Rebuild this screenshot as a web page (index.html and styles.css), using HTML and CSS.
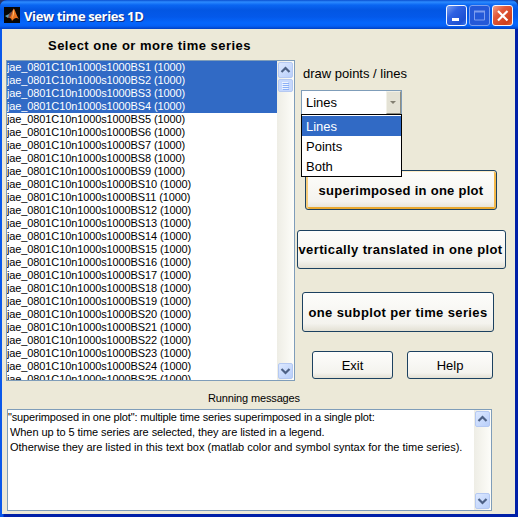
FILE: index.html
```
<!DOCTYPE html>
<html lang="en">
<head>
<meta charset="utf-8">
<title>View time series 1D</title>
<link rel="stylesheet" href="styles.css">
</head>
<body>
<div class="window">
  <header class="titlebar">
    <svg class="logo" width="16" height="16" viewBox="0 0 16 16">
      <rect width="16" height="16" fill="#080604"/>
      <path d="M1 9 L5 7 L8 4.5 L6 10 L4 11Z" fill="#5d9fb5"/>
      <path d="M5 7 L8 4.5 L9.5 2 L8 9 L6 11 L4 11Z" fill="#80473a"/>
      <path d="M9.8 1.5 C11 2 12 8 15 12 C12 10 10.5 11 8 14 C7.5 12 7 11 5.5 11 C8 9 8 4 9.8 1.5Z" fill="#e9731f"/>
      <path d="M9.8 2 C10.5 5 10 9 8 12 C9 8 8.8 5 9.8 2Z" fill="#ffc27a"/>
    </svg>
    <h1 class="title">View time series 1D</h1>
    <div class="controls">
      <span class="ctl"><svg width="17" height="17"><path d="M4 12.500h7" stroke="#fff" stroke-width="3"/></svg></span>
      <span class="ctl ctl-off"><svg width="17" height="17"><path d="M3.500 4v9h10V4M3 4.500h11" fill="none" stroke="#7d9cee"/><path d="M3 4.500h11" stroke="#7d9cee" stroke-width="2"/></svg></span>
      <span class="ctl ctl-close"><svg width="17" height="17"><path d="M4 4l9.500 9.500M13.500 4l-9.500 9.500" stroke="#fff" stroke-width="2.200"/></svg></span>
    </div>
  </header>
  <main class="content">
    <div class="upper">
      <section class="left">
        <h2 class="heading">Select one or more time series</h2>
        <div class="listbox">
          <ul class="rows">
            <li class="sel">jae_0801C10n1000s1000BS1 (1000)</li>
            <li class="sel">jae_0801C10n1000s1000BS2 (1000)</li>
            <li class="sel">jae_0801C10n1000s1000BS3 (1000)</li>
            <li class="sel">jae_0801C10n1000s1000BS4 (1000)</li>
            <li>jae_0801C10n1000s1000BS5 (1000)</li>
            <li>jae_0801C10n1000s1000BS6 (1000)</li>
            <li>jae_0801C10n1000s1000BS7 (1000)</li>
            <li>jae_0801C10n1000s1000BS8 (1000)</li>
            <li>jae_0801C10n1000s1000BS9 (1000)</li>
            <li>jae_0801C10n1000s1000BS10 (1000)</li>
            <li>jae_0801C10n1000s1000BS11 (1000)</li>
            <li>jae_0801C10n1000s1000BS12 (1000)</li>
            <li>jae_0801C10n1000s1000BS13 (1000)</li>
            <li>jae_0801C10n1000s1000BS14 (1000)</li>
            <li>jae_0801C10n1000s1000BS15 (1000)</li>
            <li>jae_0801C10n1000s1000BS16 (1000)</li>
            <li>jae_0801C10n1000s1000BS17 (1000)</li>
            <li>jae_0801C10n1000s1000BS18 (1000)</li>
            <li>jae_0801C10n1000s1000BS19 (1000)</li>
            <li>jae_0801C10n1000s1000BS20 (1000)</li>
            <li>jae_0801C10n1000s1000BS21 (1000)</li>
            <li>jae_0801C10n1000s1000BS22 (1000)</li>
            <li>jae_0801C10n1000s1000BS23 (1000)</li>
            <li>jae_0801C10n1000s1000BS24 (1000)</li>
            <li>jae_0801C10n1000s1000BS25 (1000)</li>
          </ul>
          <div class="scroll">
            <span class="arrow"><svg width="13" height="14"><path d="M2.500 9l4-4 4 4" fill="none" stroke="#4d6185" stroke-width="2.200"/></svg></span>
            <span class="thumb"><svg width="13" height="11"><path d="M3 2.500h6M3 4.500h6M3 6.500h6M3 8.500h6" stroke="#eef4fe"/><path d="M4 3.500h6M4 5.500h6M4 7.500h6M4 9.500h6" stroke="#8cb0f8"/></svg></span>
            <span class="arrow arrow-down"><svg width="13" height="14"><path d="M2.500 5l4 4 4-4" fill="none" stroke="#4d6185" stroke-width="2.200"/></svg></span>
          </div>
        </div>
      </section>
      <section class="right">
        <p class="label">draw points / lines</p>
        <div class="combo">
          <span class="combo-value">Lines</span>
          <span class="combo-arrow"><svg width="12" height="20"><path d="M3 9h6l-3 3z" fill="#827f72"/></svg></span>
          <ul class="menu">
            <li class="sel">Lines</li>
            <li>Points</li>
            <li>Both</li>
          </ul>
        </div>
        <button class="btn superimposed">superimposed in one plot</button>
        <button class="btn translated">vertically translated in one plot</button>
        <button class="btn subplot">one subplot per time series</button>
        <div class="actions">
          <button class="btn small exit">Exit</button>
          <button class="btn small help">Help</button>
        </div>
      </section>
    </div>
    <h3 class="caption">Running messages</h3>
    <div class="messages">
      <div class="log">
        <p class="m1">"superimposed in one plot": multiple time series superimposed in a single plot:</p>
        <p class="m2">When up to 5 time series are selected, they are listed in a legend.</p>
        <p class="m3">Otherwise they are listed in this text box (matlab color and symbol syntax for the time series).</p>
      </div>
      <div class="scroll">
        <span class="arrow"><svg width="13" height="14"><path d="M2.500 9l4-4 4 4" fill="none" stroke="#4d6185" stroke-width="2.200"/></svg></span>
        <span class="arrow arrow-down"><svg width="13" height="14"><path d="M2.500 5l4 4 4-4" fill="none" stroke="#4d6185" stroke-width="2.200"/></svg></span>
      </div>
    </div>
  </main>
</div>
</body>
</html>
```
FILE: styles.css
```
* { box-sizing: border-box; margin: 0; padding: 0; }
body {
  width: 518px; height: 517px; overflow: hidden;
  background: #26366f;
  font-family: "Liberation Sans", Arial, sans-serif;
  font-size: 11px; color: #000;
}
ul { list-style: none; }
svg { display: block; }
.window {
  width: 518px; height: 517px;
  display: flex; flex-direction: column;
  background: linear-gradient(90deg, #0a58ea 0, #0a58ea 3px, #0020a8 4px);
  border-radius: 7px 7px 0 0;
  overflow: hidden;
}
.titlebar {
  height: 29px; flex: none;
  display: flex; align-items: center;
  padding: 1px 5px 0 4px;
  background: linear-gradient(#0a4fd0 0, #2c8bff 2px, #0a66f2 5px, #0356e3 10px, #0459ea 17px, #0566fc 23px, #0560f5 26px, #0140c2 29px);
}
.title {
  flex: 1; margin-left: 4px; margin-top: 2px;
  font: bold 13px/20px "Open Sans", "Noto Sans", sans-serif;
  letter-spacing: -0.38px; white-space: nowrap;
  color: #fff; text-shadow: 1px 1px 0 #0a2f8a;
}
.controls { display: flex; gap: 2px; margin-top: 1px; }
.ctl {
  width: 21px; height: 21px; padding: 1px;
  border: 1px solid #f4f7ff; border-radius: 3px;
  background: linear-gradient(135deg, #7a9ff0, #2f62e2 35%, #1c4fd2 80%, #3d7af2);
}
.ctl-off { border-color: #7c9fee; background: #2458d8; }
.ctl-close { background: linear-gradient(135deg, #f0a088, #e2583a 35%, #d0401c 80%, #e4683c); }
.content {
  flex: 1; margin: 0 3px 3px 2px;
  background: #ece9d8;
  display: flex; flex-direction: column;
  padding-left: 4px;
}
.upper { display: flex; height: 352px; }
.left { width: 289px; }
.heading {
  height: 31px; padding: 6px 0 0 42px;
  font-size: 13px; line-height: 21px; letter-spacing: 0.48px; white-space: nowrap;
}
.listbox {
  height: 321px; display: flex;
  background: #fff; border: 1px solid #7f9db9; overflow: hidden;
}
.rows { flex: 1; overflow: hidden; }
.rows li {
  height: 13px; line-height: 12px;
  letter-spacing: -0.115px; white-space: nowrap;
}
.sel { background: #316ac5; color: #fff; }
.scroll {
  width: 17px; flex: none;
  display: flex; flex-direction: column; align-items: center;
  padding: 1px; background: linear-gradient(90deg, #eeede5, #fdfdf9);
}
.arrow, .thumb {
  width: 15px; height: 16px; flex: none;
  border: 1px solid #b5c9f2; border-radius: 2px;
  background: linear-gradient(135deg, #dce8ff, #b9cffa);
}
.thumb { height: 13px; margin-top: 1px; background: #c6d8fd; }
.arrow-down { margin-top: auto; }
.right { width: 218px; }
.label { margin: 36px 0 0 8px; font-size: 13px; line-height: 18px; }
.combo {
  position: relative;
  width: 101px; height: 25px; margin: 7px 0 0 6px;
  display: flex; justify-content: space-between;
  border: 1px solid #7f9db9; background: #fff; font-size: 13px;
}
.combo-value { padding-left: 4px; line-height: 23px; }
.combo-arrow {
  width: 15px; height: 23px;
  background: #e4e2d5;
  border: 1px solid; border-color: #f2f1e8 #8f8d80 #8f8d80 #f2f1e8;
}
.menu {
  position: absolute; z-index: 2; left: -1px; top: 23px;
  width: 101px; height: 63px; padding-top: 1px;
  border: 1px solid #000; background: #fff;
}
.menu li { height: 20px; line-height: 21px; padding-left: 4px; }
.btn {
  display: block; height: 40px;
  border: 1px solid #1c4160; border-radius: 3px;
  background: linear-gradient(#fdfdfb, #f4f3ee 80%, #e3e0d4);
  font: bold 13px "Liberation Sans", Arial, sans-serif;
  color: #000; white-space: nowrap;
}
.superimposed {
  width: 192px; margin: 55px 0 0 10px; letter-spacing: 0.28px;
  box-shadow: inset 0 1px #fdebc4, inset 2px 0 #f7cd7c, inset -2px 0 #f3b84a, inset 0 -2px #e9a92f;
}
.translated { width: 209px; height: 39px; margin: 20px 0 0 2px; padding-right: 2px; letter-spacing: 0.38px; }
.subplot { width: 192px; margin: 23px 0 0 7px; letter-spacing: 0.37px; }
.actions { display: flex; gap: 14px; margin: 19px 0 0 17px; }
.small { height: 28px; font-weight: normal; }
.exit { width: 81px; }
.help { width: 86px; }
.caption {
  height: 28px; padding: 8px 0 0 202px;
  font-size: 11px; font-weight: normal; line-height: 18px; letter-spacing: -0.14px;
}
.messages {
  width: 485px; height: 102px; margin-left: 1px;
  display: flex; background: #fff; border: 1px solid #7f9db9;
}
.log { flex: 1; }
.log p { height: 15px; line-height: 15px; white-space: nowrap; }
.m1 { letter-spacing: -0.165px; }
.m2 { letter-spacing: -0.07px; }
.m2, .m3 { padding-left: 2px; }
```
